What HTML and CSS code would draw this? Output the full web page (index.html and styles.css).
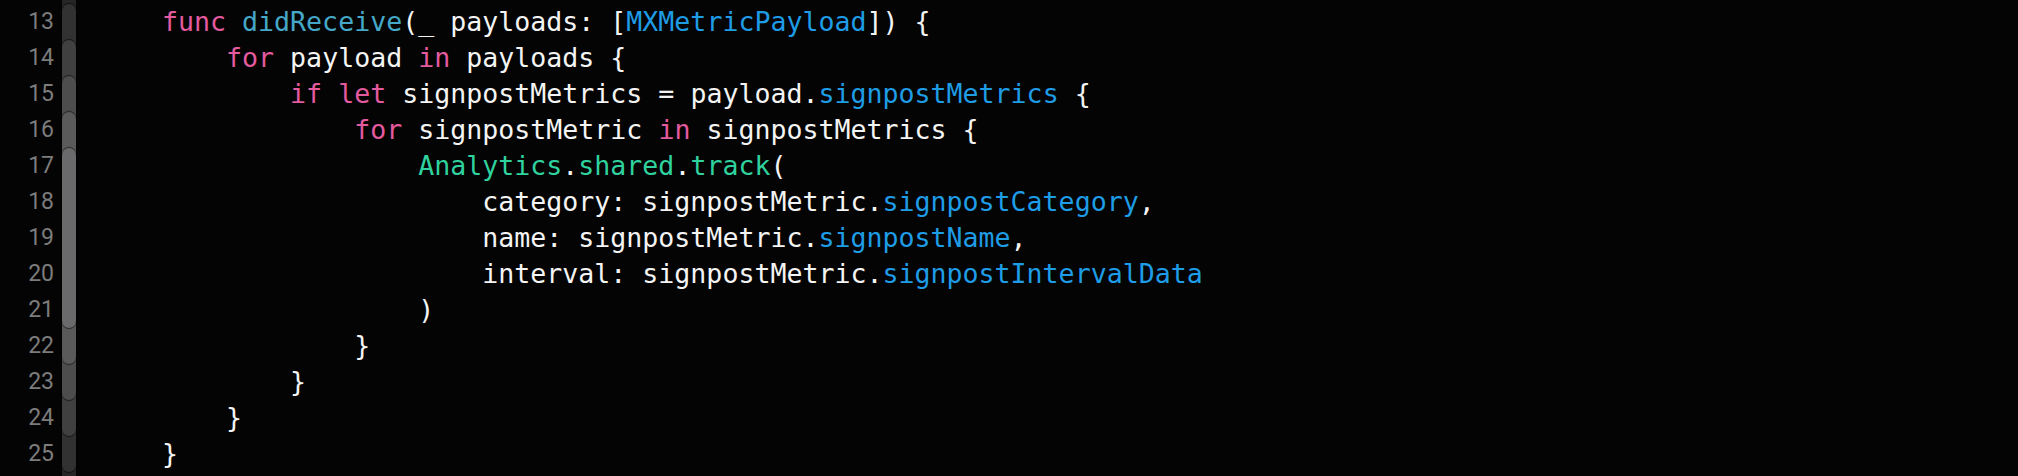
FILE: index.html
```html
<!DOCTYPE html>
<html>
<head>
<meta charset="utf-8">
<link rel="stylesheet" href="styles.css">
</head>
<body>
<div class="editor">
  <div class="gutter">
    <div class="ln">13</div><div class="ln">14</div><div class="ln">15</div><div class="ln">16</div>
    <div class="ln">17</div><div class="ln">18</div><div class="ln">19</div><div class="ln">20</div>
    <div class="ln">21</div><div class="ln">22</div><div class="ln">23</div><div class="ln">24</div>
    <div class="ln">25</div>
  </div>
  <div class="ribbon">
    <div class="scope l1">
      <div class="slot"></div>
      <div class="scope l2">
        <div class="slot"></div>
        <div class="scope l3">
          <div class="slot"></div>
          <div class="scope l4">
            <div class="slot"></div>
            <div class="scope l5">
              <div class="slot"></div><div class="slot"></div><div class="slot"></div><div class="slot"></div><div class="slot"></div>
            </div>
            <div class="slot"></div>
          </div>
          <div class="slot"></div>
        </div>
        <div class="slot"></div>
      </div>
      <div class="slot"></div>
    </div>
  </div>
  <div class="code">
<div class="line"><span class="kw">func</span> <span class="decl">didReceive</span>(_ payloads: [<span class="ty">MXMetricPayload</span>]) {</div>
<div class="line">    <span class="kw">for</span> payload <span class="kw">in</span> payloads {</div>
<div class="line">        <span class="kw">if</span> <span class="kw">let</span> signpostMetrics = payload.<span class="ty">signpostMetrics</span> {</div>
<div class="line">            <span class="kw">for</span> signpostMetric <span class="kw">in</span> signpostMetrics {</div>
<div class="line">                <span class="proj">Analytics</span>.<span class="proj">shared</span>.<span class="proj">track</span>(</div>
<div class="line">                    category: signpostMetric.<span class="ty">signpostCategory</span>,</div>
<div class="line">                    name: signpostMetric.<span class="ty">signpostName</span>,</div>
<div class="line">                    interval: signpostMetric.<span class="ty">signpostIntervalData</span></div>
<div class="line">                )</div>
<div class="line">            }</div>
<div class="line">        }</div>
<div class="line">    }</div>
<div class="line">}</div>
  </div>
</div>
</body>
</html>
```
FILE: styles.css
```css
html, body {
  margin: 0;
  padding: 0;
  background: #040404;
}
.editor {
  display: flex;
  height: 476px;
  overflow: hidden;
}
.gutter {
  width: 54px;
  padding-top: 4px;
  font-family: Roboto, "Noto Sans", sans-serif;
  font-size: 23px;
  color: #7c7c7c;
  text-align: right;
}
.ln {
  height: 36px;
  line-height: 36px;
}
.ribbon {
  width: 14px;
  margin-left: 8px;
  padding-top: 4px;
  background: #262626;
  box-sizing: border-box;
}
.scope {
  display: flex;
  flex-direction: column;
  border-radius: 7px;
  box-shadow: 0 -1px 1px rgba(0, 0, 0, 0.55), 0 1px 1px rgba(0, 0, 0, 0.55);
}
.slot {
  height: 36px;
}
.l1 { background: #323232; }
.l2 { background: #404040; }
.l3 { background: #4d4d4d; }
.l4 { background: #5a5a5a; }
.l5 { background: #6a696b; }
.code {
  margin-left: 86px;
  padding-top: 4px;
  font-family: "DejaVu Sans Mono", monospace;
  font-size: 26.6px;
  color: #f4f4f4;
}
.line {
  height: 36px;
  line-height: 36px;
  white-space: pre;
}
.kw { color: #e35a9f; }
.decl { color: #45a8c8; }
.ty { color: #1f9ce6; }
.proj { color: #2fd29e; }
```
